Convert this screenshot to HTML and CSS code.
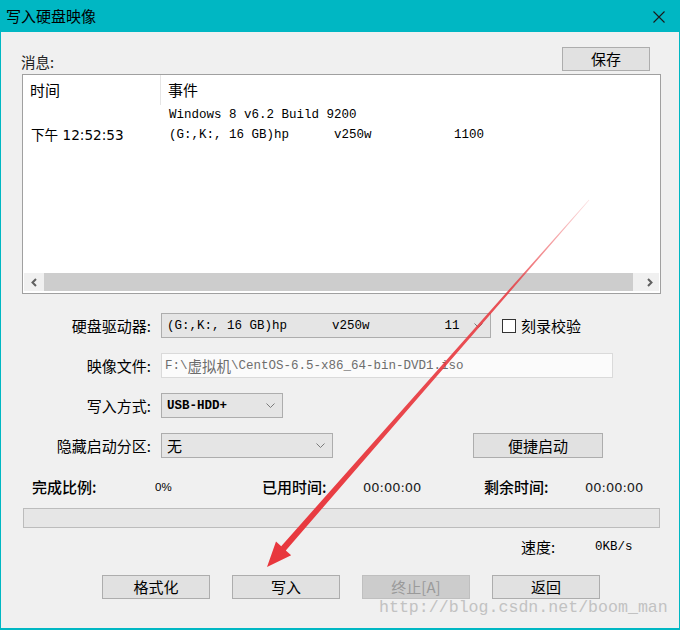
FILE: index.html
```html
<!DOCTYPE html>
<html lang="zh-CN">
<head>
<meta charset="utf-8">
<title>写入硬盘映像</title>
<link rel="stylesheet" href="styles.css">
</head>
<body>
<div class="window">
  <div class="titlebar">
    <span class="title">写入硬盘映像</span>
    <svg class="close" width="12" height="12" viewBox="0 0 12 12"><path d="M0.5 0.5 L11.5 11.5 M11.5 0.5 L0.5 11.5" stroke="#1a1a1a" stroke-width="1.1" fill="none"/></svg>
  </div>
  <div class="content">
    <div class="msg-head">
      <span class="msg-label">消息:</span>
      <button class="btn btn-save">保存</button>
    </div>
    <div class="list">
      <div class="list-header">
        <div class="col-time">时间</div>
        <div class="col-event">事件</div>
      </div>
      <div class="list-rows">
        <div class="row">
          <div class="col-time"></div>
          <div class="col-event mono">Windows 8 v6.2 Build 9200</div>
        </div>
        <div class="row">
          <div class="col-time time">下午 12:52:53</div>
          <div class="col-event mono">(G:,K:, 16 GB)hp      v250w           1100</div>
        </div>
      </div>
      <div class="hscroll">
        <div class="sb-arrow"><svg width="6" height="9" viewBox="0 0 6 9"><path d="M5 1 L1.5 4.5 L5 8" stroke="#606060" stroke-width="2" fill="none"/></svg></div>
        <div class="sb-thumb"></div>
        <div class="sb-track"></div>
        <div class="sb-arrow"><svg width="6" height="9" viewBox="0 0 6 9"><path d="M1 1 L4.5 4.5 L1 8" stroke="#606060" stroke-width="2" fill="none"/></svg></div>
      </div>
    </div>

    <div class="form">
      <div class="form-row">
        <label class="form-label">硬盘驱动器:</label>
        <div class="select select-drive">
          <span class="select-text mono">(G:,K:, 16 GB)hp      v250w          11</span>
          <svg class="chev" width="9" height="5" viewBox="0 0 9 5"><path d="M0.5 0.5 L4.5 4.5 L8.5 0.5" stroke="#7a7a7a" stroke-width="1" fill="none"/></svg>
        </div>
        <span class="checkbox"></span>
        <span class="check-label">刻录校验</span>
      </div>
      <div class="form-row">
        <label class="form-label">映像文件:</label>
        <div class="input mono">F:\<span class="cjk">虚拟机</span>\CentOS-6.5-x86_64-bin-DVD1.iso</div>
      </div>
      <div class="form-row">
        <label class="form-label">写入方式:</label>
        <div class="select select-mode">
          <span class="select-text mono bold">USB-HDD+</span>
          <svg class="chev" width="9" height="5" viewBox="0 0 9 5"><path d="M0.5 0.5 L4.5 4.5 L8.5 0.5" stroke="#7a7a7a" stroke-width="1" fill="none"/></svg>
        </div>
      </div>
      <div class="form-row">
        <label class="form-label">隐藏启动分区:</label>
        <div class="select select-hide">
          <span class="select-text">无</span>
          <svg class="chev" width="9" height="5" viewBox="0 0 9 5"><path d="M0.5 0.5 L4.5 4.5 L8.5 0.5" stroke="#7a7a7a" stroke-width="1" fill="none"/></svg>
        </div>
        <button class="btn btn-quick">便捷启动</button>
      </div>
    </div>

    <div class="stats">
      <span class="stat-label">完成比例:</span>
      <span class="pct">0%</span>
      <span class="stat-label">已用时间:</span>
      <span class="clock">00:00:00</span>
      <span class="stat-label">剩余时间:</span>
      <span class="clock">00:00:00</span>
    </div>

    <div class="progress"></div>

    <div class="speed">
      <span class="speed-label">速度:</span>
      <span class="mono speed-val">0KB/s</span>
    </div>

    <div class="actions">
      <button class="btn btn-action">格式化</button>
      <button class="btn btn-action">写入</button>
      <button class="btn btn-action disabled">终止[A]</button>
      <button class="btn btn-action">返回</button>
    </div>
  </div>
</div>

<div class="watermark">http://blog.csdn.net/boom_man</div>

<svg class="annot" width="680" height="630" viewBox="0 0 680 630">
  <defs>
    <linearGradient id="fade" x1="589" y1="200" x2="267" y2="567" gradientUnits="userSpaceOnUse">
      <stop offset="0" stop-color="#e8363c" stop-opacity="0.15"/>
      <stop offset="0.25" stop-color="#e8363c" stop-opacity="0.85"/>
      <stop offset="1" stop-color="#e8363c" stop-opacity="1"/>
    </linearGradient>
  </defs>
  <polygon fill="url(#fade)" points="589.3,200.2 285.8,550.4 291.2,555.2 267,567 276.0,541.6 281.2,546.2 588.8,199.8"/>
</svg>
</body>
</html>
```

FILE: styles.css
```css
* { box-sizing: border-box; }

body {
  margin: 0;
  width: 680px;
  height: 630px;
  overflow: hidden;
  position: relative;
  background: #f0f0f0;
  font-family: "Noto Sans CJK SC", "Microsoft YaHei", sans-serif;
  font-size: 15px;
  color: #000;
}

.window {
  width: 680px;
  height: 630px;
  border: 1px solid #00b7c3;
  border-top: none;
  border-bottom-width: 2px;
  background: #f0f0f0;
  display: flex;
  flex-direction: column;
}

.titlebar {
  height: 32px;
  margin: 0 -1px;
  background: #00b7c3;
  display: flex;
  align-items: center;
  justify-content: space-between;
  padding: 0 15px 0 6px;
  flex-shrink: 0;
}

.title {
  font-size: 15px;
  line-height: 18px;
  color: #000;
}

.close { display: block; margin-top: 2px; }

.content {
  padding: 15px 18px 0 20px;
  display: flex;
  flex-direction: column;
}

.mono {
  font-family: "Liberation Mono", "Noto Sans CJK SC", monospace;
  font-size: 12.5px;
  white-space: pre;
}

.mono .cjk {
  font-family: "Noto Sans CJK SC", sans-serif;
  font-size: 14.5px;
}

.bold { font-weight: bold; }

.msg-head {
  height: 24px;
  display: flex;
  justify-content: space-between;
  align-items: flex-end;
  margin-bottom: 3px;
}

.msg-label {
  line-height: 16px;
  padding-bottom: 1px;
  color: #222;
  font-size: 14.5px;
}

.btn {
  font-family: "Noto Sans CJK SC", sans-serif;
  font-size: 15px;
  color: #000;
  background: #e1e1e1;
  border: 1px solid #adadad;
  padding: 0;
  line-height: 20px;
  height: 24px;
  border-radius: 0;
}

.btn-save {
  width: 88px;
  margin-right: 11px;
}

.list {
  margin-left: 1px;
  height: 220px;
  border: 1px solid #a0a0a0;
  background: #fff;
  display: flex;
  flex-direction: column;
  padding: 0 1px 2px 1px;
}

.list-header {
  height: 30px;
  display: flex;
  align-items: center;
  flex-shrink: 0;
}

.list-header .col-time {
  width: 137px;
  height: 30px;
  line-height: 30px;
  padding-left: 6px;
  border-right: 1px solid #e5e5e5;
}

.list-header .col-event {
  padding-left: 7px;
  line-height: 30px;
}

.list-rows {
  flex: 1;
}

.row {
  height: 20px;
  display: flex;
  align-items: center;
}

.row .col-time {
  width: 138px;
  padding-left: 7px;
}

.row .col-event {
  padding-left: 7px;
}

.time {
  font-family: "DejaVu Sans", "Noto Sans CJK SC", sans-serif;
  font-size: 13.6px;
  white-space: pre;
}

.time, .row .mono { line-height: 20px; }

.hscroll {
  height: 18px;
  display: flex;
  background: #f0f0f0;
  flex-shrink: 0;
}

.sb-arrow {
  width: 20px;
  display: flex;
  align-items: center;
  justify-content: center;
}

.sb-arrow:last-child { width: 18px; }

.sb-thumb {
  flex: 1;
  background: #cdcdcd;
}

.sb-track { width: 8px; }

.form {
  margin-top: 19px;
  display: flex;
  flex-direction: column;
  gap: 15px;
}

.form-row {
  height: 25px;
  display: flex;
  align-items: center;
}

.form-label {
  width: 130px;
  text-align: right;
  margin-right: 10px;
  line-height: 18px;
  white-space: nowrap;
}

.select {
  height: 25px;
  border: 1px solid #adadad;
  background: #e5e5e5;
  display: flex;
  align-items: center;
  padding-left: 5px;
}

.select-text {
  flex: 1;
  overflow: hidden;
  line-height: 20px;
}

.chev {
  flex-shrink: 0;
  margin: 0 7px 0 8px;
}

.select-drive { width: 330px; }
.select-mode { width: 122px; }
.select-hide { width: 172px; }

.checkbox {
  width: 14px;
  height: 14px;
  border: 1px solid #333;
  background: #fff;
  margin-left: 11px;
  margin-right: 5px;
}

.check-label { line-height: 18px; }

.input {
  width: 452px;
  height: 25px;
  border: 1px solid #dadada;
  background: #fbfbfb;
  color: #6d6d6d;
  padding-left: 3px;
  display: flex;
  align-items: center;
  line-height: 20px;
}

.btn-quick {
  width: 130px;
  height: 25px;
  margin-left: 140px;
}

.stats {
  margin-top: 19px;
  height: 20px;
  padding-left: 11px;
  display: grid;
  grid-template-columns: 123px 107px 101px 121px 101px auto;
  align-items: center;
}

.stat-label {
  line-height: 20px;
  font-weight: 500;
}

.pct {
  font-family: "Liberation Sans", sans-serif;
  font-size: 11.5px;
}

.clock {
  font-family: "DejaVu Sans", sans-serif;
  font-size: 13px;
  color: #1a1a1a;
}

.progress {
  margin: 11px 1px 0 2px;
  height: 20px;
  border: 1px solid #bcbcbc;
  background: #e6e6e6;
}

.speed {
  margin-top: 9px;
  height: 20px;
  padding-left: 500px;
  display: grid;
  grid-template-columns: 74px auto;
  align-items: center;
}

.speed-label { line-height: 20px; }

.actions {
  margin-top: 18px;
  padding-left: 81px;
  display: flex;
  gap: 22px;
}

.btn-action { width: 108px; }

.btn.disabled {
  background: #cccccc;
  border-color: #bfbfbf;
  color: #9a9a9a;
}

.watermark {
  position: absolute;
  left: 379px;
  top: 597px;
  font-family: "Liberation Mono", monospace;
  font-size: 16.6px;
  line-height: 22px;
  color: #c2c2c2;
  white-space: pre;
}

.annot {
  position: absolute;
  left: 0;
  top: 0;
  pointer-events: none;
}
```
